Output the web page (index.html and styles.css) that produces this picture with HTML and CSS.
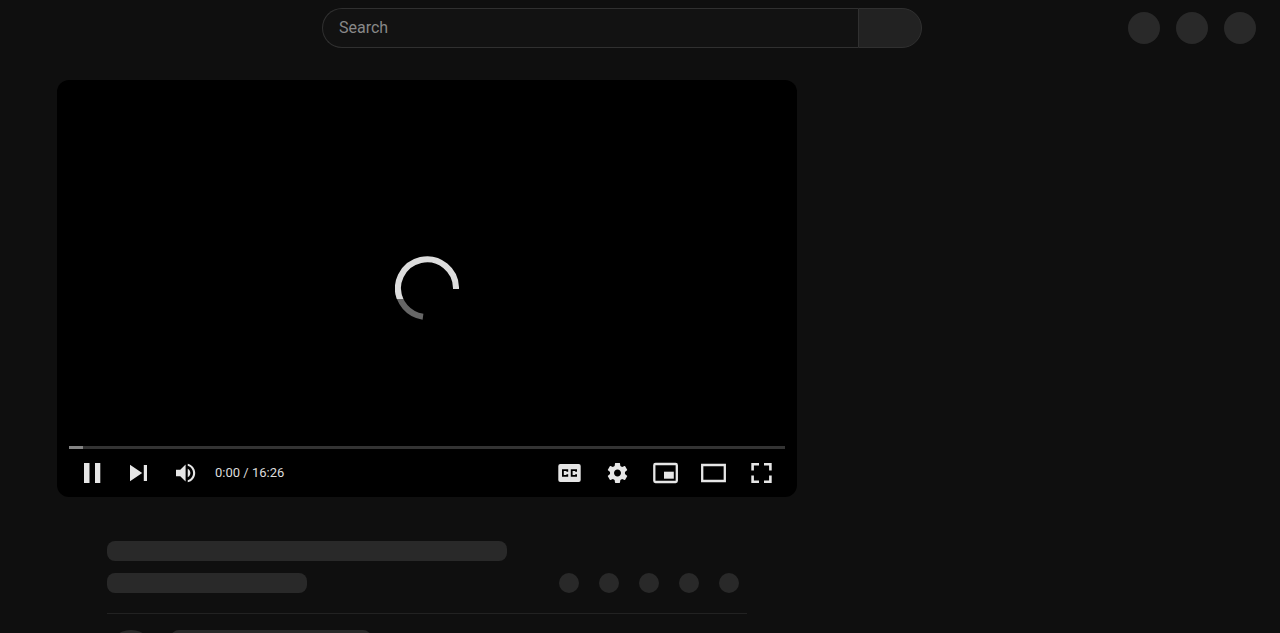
FILE: index.html
```html
<!DOCTYPE html>
<html lang="en">
<head>
<meta charset="utf-8">
<meta name="viewport" content="width=device-width, initial-scale=1">
<title>Video</title>
<link rel="stylesheet" href="styles.css">
</head>
<body>
<header class="masthead">
  <form class="search" role="search">
    <input class="search-input" type="text" placeholder="Search" aria-label="Search">
    <button class="search-button" type="button" aria-label="Submit search"></button>
  </form>
  <div class="masthead-actions">
    <span class="dot dot-large"></span>
    <span class="dot dot-large"></span>
    <span class="dot dot-large"></span>
  </div>
</header>
<main class="watch">
  <div class="primary">
    <section class="player" aria-label="Video player">
      <div class="stage">
        <svg class="spinner" viewBox="0 0 64 64" aria-hidden="true">
          <clipPath id="upper"><path d="M0 0h64v43H0z"/></clipPath>
          <path class="spinner-dim" d="M3 32A29 29 0 0 0 28 60.7"/>
          <path class="spinner-bright" clip-path="url(#upper)" d="M61 33A29 29 0 1 0 6.1 45.3"/>
        </svg>
      </div>
      <div class="progress"><div class="progress-loaded"></div></div>
      <div class="controls">
        <button class="control" type="button" aria-label="Pause"><svg viewBox="0 0 46 48"><path d="M15 14h5.5v20H15zM26 14h5.3v20H26z"/></svg></button>
        <button class="control" type="button" aria-label="Next"><svg viewBox="0 0 46 48"><path d="M15 15.8L27.2 24 15 32.2zM28.8 16H32v16h-3.2z"/></svg></button>
        <button class="control" type="button" aria-label="Mute"><svg viewBox="0 0 46 48"><path transform="translate(11.8 11.2) scale(1.067)" d="M3 9v6h4l5 5V4L7 9H3zm13.5 3c0-1.77-1.02-3.29-2.5-4.03v8.05c1.48-.73 2.5-2.25 2.5-4.02zM14 3.23v2.06c2.89.86 5 3.54 5 6.71s-2.11 5.85-5 6.71v2.06c4.01-.91 7-4.49 7-8.77s-2.99-7.86-7-8.77z"/></svg></button>
        <span class="time">0:00 / 16:26</span>
        <div class="controls-right">
          <button class="control wide" type="button" aria-label="Captions"><svg viewBox="0 0 48 48"><rect x="13.3" y="15" width="22.4" height="18" rx="2"/><path class="cutout" d="M22.3 22.8V21.2H17.9V26.8H22.3V25.2M31.1 22.8V21.2H26.7V26.8H31.1V25.2"/></svg></button>
          <button class="control wide" type="button" aria-label="Settings"><svg viewBox="0 0 48 48"><path transform="translate(12.5 12)" d="M19.43 12.98c.04-.32.07-.64.07-.98s-.03-.66-.07-.98l2.11-1.65c.19-.15.24-.42.12-.64l-2-3.46c-.12-.22-.39-.3-.61-.22l-2.49 1c-.52-.4-1.08-.73-1.69-.98l-.38-2.65C14.46 2.18 14.25 2 14 2h-4c-.25 0-.46.18-.49.42l-.38 2.65c-.61.25-1.17.59-1.69.98l-2.49-1c-.23-.09-.49 0-.61.22l-2 3.46c-.13.22-.07.49.12.64l2.11 1.65c-.04.32-.07.65-.07.98s.03.66.07.98l-2.11 1.65c-.19.15-.24.42-.12.64l2 3.46c.12.22.39.3.61.22l2.49-1c.52.4 1.08.73 1.69.98l.38 2.65c.03.24.24.42.49.42h4c.25 0 .46-.18.49-.42l.38-2.65c.61-.25 1.17-.59 1.69-.98l2.49 1c.23.09.49 0 .61-.22l2-3.46c.12-.22.07-.49-.12-.64l-2.11-1.65zM12 15.5c-1.93 0-3.5-1.57-3.5-3.5s1.57-3.5 3.5-3.5 3.5 1.57 3.5 3.5-1.57 3.5-3.5 3.5z"/></svg></button>
          <button class="control wide" type="button" aria-label="Miniplayer"><svg viewBox="0 0 48 48"><rect class="outline" x="13.3" y="15" width="22.5" height="18" rx="1.2"/><path d="M23 22.7h9.8v7H23z"/></svg></button>
          <button class="control wide" type="button" aria-label="Theater mode"><svg viewBox="0 0 48 48"><path class="outline" d="M13.2 16h22.6v16H13.2z"/></svg></button>
          <button class="control wide" type="button" aria-label="Full screen"><svg viewBox="0 0 48 48"><path class="outline corners" d="M15.6 21.6V15.2H22M27 15.2H33.4V21.6M33.4 26.4V32.8H27M22 32.8H15.6V26.4"/></svg></button>
        </div>
      </div>
    </section>
    <section class="details" aria-label="Video details">
      <div class="bar bar-title"></div>
      <div class="meta-row">
        <div class="bar bar-short"></div>
        <div class="meta-dots">
          <span class="dot"></span>
          <span class="dot"></span>
          <span class="dot"></span>
          <span class="dot"></span>
          <span class="dot"></span>
        </div>
      </div>
      <div class="owner">
        <span class="dot dot-avatar"></span>
        <div class="bar bar-short"></div>
      </div>
    </section>
  </div>
</main>
</body>
</html>
```
FILE: styles.css
```css
* {
  box-sizing: border-box;
}

html {
  background: #0f0f0f;
  scrollbar-width: none;
}

body {
  margin: 0;
  font-family: Roboto, "Liberation Sans", sans-serif;
  color: #ddd;
}

.masthead {
  display: flex;
  align-items: center;
  justify-content: space-between;
  gap: 24px;
  height: 56px;
  padding: 0 24px 0 116px;
}

.masthead::before {
  content: "";
}

.search {
  display: flex;
  flex: 0 1 600px;
  height: 40px;
}

.search-input {
  flex: 1;
  min-width: 0;
  padding: 0 16px;
  border: 1px solid #303030;
  border-right: 0;
  border-radius: 20px 0 0 20px;
  background: #121212;
  color: #eee;
  font: 16px/24px Roboto, "Liberation Sans", sans-serif;
}

.search-input::placeholder {
  color: #888;
  opacity: 1;
}

.search-button {
  width: 64px;
  padding: 0;
  border: 1px solid #303030;
  border-radius: 0 20px 20px 0;
  background: #222;
}

.masthead-actions {
  display: flex;
  gap: 16px;
}

.dot {
  flex: none;
  width: 20px;
  height: 20px;
  border-radius: 50%;
  background: #292929;
}

.dot-large {
  width: 32px;
  height: 32px;
}

.dot-avatar {
  width: 48px;
  height: 48px;
}

.watch {
  display: grid;
  grid-template-columns: minmax(0, 740fr) 426fr;
  padding: 24px 57px;
}

.player {
  display: flex;
  flex-direction: column;
  aspect-ratio: 740 / 417;
  padding: 0 12px;
  border-radius: 12px;
  background: #000;
}

.stage {
  display: grid;
  flex: 1;
  place-items: center;
  padding-top: 50px;
}

.spinner {
  width: 64px;
  height: 64px;
  fill: none;
  stroke-width: 6;
}

.spinner-bright {
  stroke: #ddd;
}

.spinner-dim {
  stroke: #666;
}

.progress {
  height: 3px;
  background: #333;
}

.progress-loaded {
  width: 2%;
  height: 100%;
  background: #858585;
}

.controls {
  display: flex;
  align-items: center;
  height: 48px;
}

.control {
  width: 46px;
  height: 48px;
  padding: 0;
  border: 0;
  background: none;
}

.control svg {
  display: block;
  width: 100%;
  height: 100%;
  fill: #e6e6e6;
}

.wide {
  width: 48px;
}

.control .outline {
  fill: none;
  stroke: #e6e6e6;
  stroke-width: 2.3;
}

.control .corners {
  stroke-width: 2.6;
}

.control .cutout {
  fill: none;
  stroke: #000;
  stroke-width: 1.8;
}

.time {
  padding-left: 8px;
  font-size: 13px;
  line-height: 16px;
}

.controls-right {
  display: flex;
  margin-left: auto;
}

.details {
  padding: 44px 50px 0;
}

.bar {
  height: 20px;
  border-radius: 8px;
  background: #292929;
}

.bar-title {
  width: 400px;
  max-width: 100%;
}

.bar-short {
  width: 200px;
}

.meta-row {
  display: flex;
  justify-content: space-between;
  padding: 12px 8px 20px 0;
  border-bottom: 1px solid #222;
}

.meta-dots {
  display: flex;
  gap: 20px;
}

.owner {
  display: flex;
  gap: 16px;
  padding-top: 16px;
}
```
